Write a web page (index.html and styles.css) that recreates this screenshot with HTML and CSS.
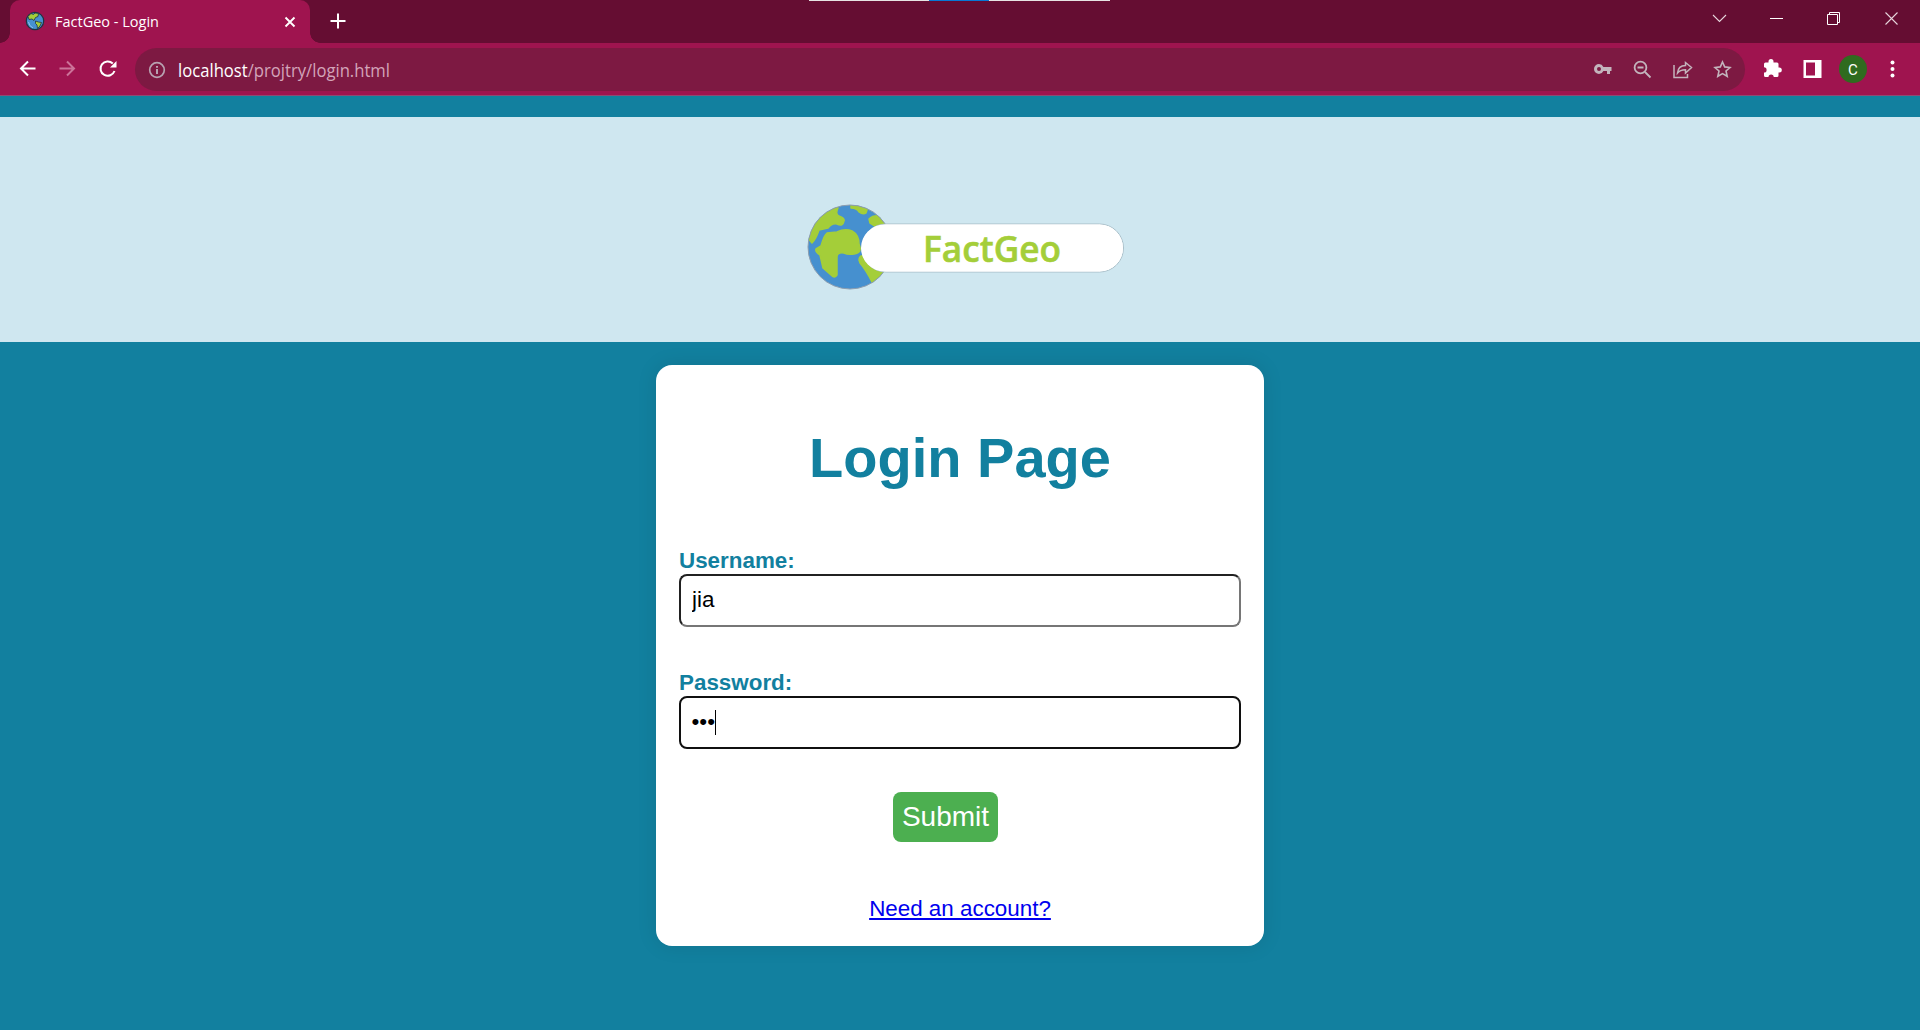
FILE: index.html
```html
<!DOCTYPE html>
<html lang="en">
<head>
<meta charset="utf-8">
<title>FactGeo - Login</title>
<link rel="stylesheet" href="styles.css">
</head>
<body>
<div class="tabstrip">
  <div class="tab">
    <svg class="favicon" viewBox="0 0 20 20"><circle cx="10" cy="10" r="8.7" fill="#4690cf" stroke="#1f3440" stroke-width="1.2"/><path d="M3 5.500 6 2.500 8.500 3.500 10 2 13.500 2.500 13 5.500 10.500 6.500 9 9.500 7 8 4 8.500ZM10.500 10 13.500 11 16.500 11.500 15 15 12.500 17.500 12 14 10.500 12.500Z" fill="#a4ce39" stroke="#1f3440" stroke-width=".8"/><path d="M3.500 11Q4 15 8 17" stroke="#8dc3ec" fill="none"/></svg>
    <svg class="tab-title" viewBox="0 0 110 26"><text x="0" y="19" textLength="104" lengthAdjust="spacingAndGlyphs">FactGeo - Login</text></svg>
    <svg class="tab-close" viewBox="0 0 12 12"><path d="M1.500 1.500 10.500 10.500M10.500 1.500 1.500 10.500" stroke="#fff" stroke-width="1.900"/></svg>
  </div>
  <svg class="new-tab" viewBox="0 0 16 16"><path d="M8 .5V15.5M.5 8H15.5" stroke="#fff" stroke-width="2"/></svg>
  <div class="taskbar-hint"><i></i></div>
  <svg class="window-buttons" viewBox="0 0 220 43" fill="none" stroke="#fff"><path d="M13 15 19.5 21.5 26 15M185.500 12.500 197.500 24.500M197.500 12.500 185.500 24.500" stroke="#e6d5dc" stroke-width="1.1"/><path d="M70 18.500H83M127.500 14.500H137.500V24.500H127.500ZM129.500 14V12.500H139.500V22.500H138"/></svg>
</div>
<div class="toolbar">
  <svg class="nav-icons" viewBox="0 0 135 52" fill="none" stroke="#fff" stroke-width="2"><path d="M35.500 25.500H21M28 18.500 21 25.500 28 32.500"/><path d="M59.500 25.500H74M67 18.500 74 25.500 67 32.500" stroke="#cc7399"/><path d="M114.500 28A7.200 7.200 0 1 1 112.800 20.500"/><path d="M116.500 18V24.500H110Z" fill="#fff" stroke="none"/></svg>
  <div class="address">
    <svg class="info" viewBox="0 0 18 18"><circle cx="9" cy="9" r="7.300" fill="none" stroke="#b8a2b1" stroke-width="1.700"/><path d="M9 8V13M9 5V6.700" stroke="#b8a2b1" stroke-width="2"/></svg>
    <svg class="url" viewBox="0 0 218 32"><text x="0" y="23" textLength="212" lengthAdjust="spacingAndGlyphs"><tspan fill="#fff">localhost</tspan><tspan fill="#d3a4b9">/projtry/login.html</tspan></text></svg>
    <svg class="page-actions" viewBox="0 0 160 43" fill="none" stroke="#c3b4bc" stroke-width="1.800"><path d="M14 16A5 5 0 1 0 14 26 5 5 0 0 0 18.400 23H22V26H25V23H26.500V19H18.400A5 5 0 0 0 14 16ZM14 19A2 2 0 1 1 14 23 2 2 0 0 1 14 19Z" fill="#c3b4bc" fill-rule="evenodd" stroke="none"/><circle cx="55.500" cy="19.500" r="5.900"/><path d="M60 24 65.500 29.500M52.500 19.500H58.500"/><path d="M89 17V29.500H102.500V26" stroke-width="1.500"/><path d="M92.500 25C93 19.500 96 17.500 100.500 17.500V14.500L106.500 19.500 100.500 25V21.800C97 21.800 94 23 92.500 25Z" stroke-width="1.500"/><path d="M137.500 14 139.700 18.900 145 19.500 141 23 142.200 28.300 137.500 25.600 132.800 28.300 134 23 130 19.500 135.300 18.900Z" stroke-width="1.600"/></svg>
  </div>
  <svg class="extensions" viewBox="0 0 175 52"><path d="M20.500 19.500H23.500V18.500A2.500 2.500 0 0 1 28.500 18.500V19.500H32Q33.500 19.500 33.500 21V24.500H34.300A2.500 2.500 0 0 1 34.300 29.500H33.500V32.500Q33.500 34 32 34H28.700A2.600 2.600 0 0 0 23.500 34H20.500Q19 34 19 32.500V29.500A2.600 2.600 0 0 0 19 24.300V21Q19 19.500 20.500 19.500Z" fill="#fff"/><path d="M58.500 17H76.500V35H58.500ZM61 19.500V32.500H70V19.500Z" fill="#fff" fill-rule="evenodd"/><circle cx="108" cy="26" r="14" fill="#2f6b1f"/><text class="avatar" x="108" y="31.500" text-anchor="middle">C</text><g fill="#fff"><circle cx="147.500" cy="19.500" r="2"/><circle cx="147.500" cy="26" r="2"/><circle cx="147.500" cy="32.500" r="2"/></g></svg>
</div>
<main class="page">
  <header class="banner">
    <svg class="logo" viewBox="0 0 320 88">
      <defs><clipPath id="globe"><circle cx="44" cy="43" r="42"/></clipPath></defs>
      <circle cx="44" cy="43" r="42" fill="#4690cf"/>
      <g fill="#a4ce39" stroke="#a4ce39" stroke-width="1.500" stroke-linejoin="round" clip-path="url(#globe)">
        <path d="M0 32 6 39Q10 35 13 26L22 24Q26 19 31 20Q37 23 38 17Q39 14 33 12Q29 10 32 4L25 0 0 16Z"/>
        <path d="M45 0V4Q51 4 53 8Q57 11 60 9Q62 5 61 0ZM63 15Q67 11 74 12L88 24 72 25Q68 21 64 19Z"/>
        <path d="M10 45 15 42Q18 31 21 29L31 28Q39 24 46 27Q53 31 53 40 57 49 48 50Q42 51 38 49Q31 48 31 53V71Q29 75 25 71L17 64 14 51Q9 48 10 45Z"/>
        <path d="M53 56Q53 51 58 52L76 62 79 70 66 78Q60 66 54 59Z"/>
      </g>
      <circle cx="44" cy="43" r="42" fill="none" stroke="#8c9daf"/>
      <rect x="56" y="20" width="261.500" height="48" rx="24" fill="#fff" stroke="#a9bfc9"/>
      <rect x="55" y="20.500" width="262" height="47" rx="23.500" fill="#fff"/>
      <text class="brand" x="117" y="57.500" textLength="138" lengthAdjust="spacingAndGlyphs">FactGeo</text>
    </svg>
  </header>
  <form class="card">
    <h1>Login Page</h1>
    <label for="username">Username:</label>
    <input class="field" id="username" type="text" value="jia">
    <label class="second">Password:</label>
    <div class="field focused">•••<span class="caret"></span></div>
    <button class="submit" type="button">Submit</button>
    <a href="#">Need an account?</a>
  </form>
</main>
</body>
</html>
```
FILE: styles.css
```css
* { box-sizing: border-box; }
body { margin: 0; height: 1030px; overflow: hidden; background: #12809f; font-family: "Liberation Sans", Arial, sans-serif; }
svg { display: block; flex: none; overflow: visible; }
.tabstrip { position: relative; display: flex; height: 43px; background: #650d32; }
.tab { position: relative; display: flex; align-items: center; width: 300px; height: 43px; margin-left: 10px; padding: 0 14px 2px 15px; background: #9f144f; border-radius: 10px 10px 0 0; }
.tab::before, .tab::after { content: ""; position: absolute; bottom: 0; width: 10px; height: 10px; }
.tab::before { left: -10px; background: radial-gradient(circle at 0 0, #650d32 9.5px, #9f144f 10px); }
.tab::after { right: -10px; background: radial-gradient(circle at 100% 0, #650d32 9.5px, #9f144f 10px); }
.favicon { width: 20px; height: 20px; }
.tab-title { width: 110px; height: 26px; margin-left: 10px; font: 15px "Open Sans", sans-serif; fill: #fff; }
.tab-close { width: 12px; height: 12px; margin: 2px 0 0 auto; }
.new-tab { width: 16px; height: 16px; margin: 13px 0 0 19.5px; }
.taskbar-hint { position: absolute; top: 0; left: 809px; width: 301px; height: 1px; padding-left: 120px; background: #e7e3e3; }
.taskbar-hint i { display: block; width: 60px; height: 1px; background: #0778d4; }
.window-buttons { width: 220px; height: 43px; margin-left: auto; }
.toolbar { display: flex; height: 52px; background: #9f144f; }
.nav-icons { width: 135px; height: 52px; }
.address { display: flex; align-items: center; flex: 1; height: 43px; margin-top: 5px; padding-left: 13px; border-radius: 22px; background: #7d1942; }
.info { width: 18px; height: 18px; }
.url { width: 218px; height: 32px; margin-left: 11.5px; font: 18px "Open Sans", sans-serif; }
.page-actions { width: 160px; height: 43px; margin-left: auto; }
.extensions { width: 175px; height: 52px; }
.avatar { font: 15px Roboto, sans-serif; fill: #fff; }
.page { height: 935px; padding-top: 21px; border-top: 1px solid #8d4a73; background: #12809f; }
.banner { display: flex; justify-content: center; height: 225px; padding: 87px 0 0 12px; background: #cfe7f0; }
.logo { width: 320px; height: 88px; }
.brand { font: 600 36px "Open Sans", sans-serif; fill: #a4ce39; stroke: #a4ce39; stroke-width: .6px; }
.card { display: flex; flex-direction: column; width: 608px; height: 581px; margin: 23px auto 0; padding: 61px 23px 0; border-radius: 16px; background: #fff; box-shadow: 0 0 20px rgba(0, 0, 0, .1); }
h1 { margin: 0 0 57px; font-size: 56px; line-height: 64px; text-align: center; color: #12809f; }
label { height: 27px; font-size: 22.4px; font-weight: bold; line-height: 28px; color: #12809f; }
.second { margin-top: 42px; }
.field { display: flex; align-items: center; width: 562px; height: 53px; padding: 0 11px 1px; border: 2px inset #767676; border-radius: 8px; background: #fff; font: 22.4px "Liberation Sans", Arial, sans-serif; color: #000; }
.focused { padding-left: 10.5px; border: 2px solid #101010; }
.caret { width: 1px; height: 25px; background: #000; }
.submit { width: 105px; height: 50px; margin: 43px 0 0 214px; padding: 0 0 1px; border: 0; border-radius: 8px; background: #4caf50; font: 28px "Liberation Sans", Arial, sans-serif; color: #fff; }
a { align-self: center; margin-top: 54px; font-size: 22.4px; line-height: 26px; color: #00e; }
```
